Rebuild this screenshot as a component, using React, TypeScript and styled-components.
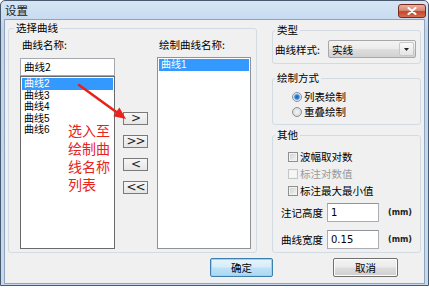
import React from 'react'
import styled, { createGlobalStyle } from 'styled-components'

const GlobalStyle = createGlobalStyle`
  html, body {
    margin: 0;
    padding: 0;
    background: #ffffff;
    overflow: hidden;
  }
  body {
    font-family: "Noto Sans CJK SC", "Noto Sans", sans-serif;
    font-size: 10.5px;
    color: #000;
  }
`

const Window = styled.div`
  width: 429px;
  height: 286px;
  box-sizing: border-box;
  border: 1px solid #4a5a6e;
  border-radius: 5px 5px 0 0;
  background: linear-gradient(#d6e5f5, #bfd5ee 30px, #c6d9ef);
  display: flex;
  flex-direction: column;
`

const TitleBar = styled.div`
  height: 18px;
  flex: none;
  display: flex;
  align-items: center;
  justify-content: space-between;
  padding: 0 2px 0 4px;
`

const Title = styled.span`
  font-size: 11.5px;
  line-height: 14px;
  color: #1a1a1a;
`

const CloseButton = styled.div`
  width: 28px;
  height: 14px;
  box-sizing: border-box;
  margin-top: 2px;
  border: 1px solid #7a2a1c;
  border-radius: 3px;
  background: linear-gradient(#eab0a2, #d98a74 45%, #c4472d 55%, #d46c52);
  display: flex;
  align-items: center;
  justify-content: center;
`

const Client = styled.div`
  flex: 1;
  margin: 0 3px 3px 3px;
  border: 1px solid #8ea3bc;
  background: #f0f0f0;
  padding: 1px 3px 6px 3px;
  display: flex;
  flex-direction: column;
`

const MainRow = styled.div`
  flex: 1;
  display: flex;
  gap: 15px;
  min-height: 0;
`

const Group = styled.fieldset<{ $pad: string; $mt?: number; $grow?: boolean; $width?: number }>`
  margin: ${p => p.$mt ?? 0}px 0 0 0;
  padding: ${p => p.$pad};
  border: 1px solid #d3dbe2;
  border-radius: 3px;
  min-width: 0;
  box-sizing: border-box;
  display: flex;
  flex-direction: column;
  flex: ${p => (p.$grow ? '1 1 auto' : 'none')};
  ${p => (p.$width ? `width: ${p.$width}px;` : '')}
`

const Legend = styled.legend<{ $offset: number }>`
  padding: 0 2px;
  margin-left: ${p => p.$offset}px;
  line-height: 14px;
  font-size: 10.5px;
`

const PickGrid = styled.div`
  flex: 1;
  position: relative;
  display: grid;
  grid-template-columns: 95px 1fr 94px;
  grid-template-rows: auto 1fr;
  row-gap: 5px;
  min-height: 0;
`

const ColLabel = styled.div<{ $indent: number }>`
  margin-top: 3px;
  line-height: 14px;
  padding-left: ${p => p.$indent}px;
  white-space: nowrap;
`

const LeftCol = styled.div`
  display: flex;
  flex-direction: column;
  min-height: 0;
`

const ComboInput = styled.div`
  margin-top: 1px;
  height: 18px;
  box-sizing: border-box;
  border: 1px solid #a5a8ae;
  background: #fff;
  padding-left: 3px;
  line-height: 16px;
  font-size: 10.5px;
`

const ListBox = styled.div<{ $dark?: boolean }>`
  flex: 1;
  box-sizing: border-box;
  border: 1px solid ${p => (p.$dark ? '#6a6a6a' : '#8e939a')};
  background: #fff;
  padding: 1px;
`

const ListItem = styled.div<{ $selected?: boolean }>`
  height: 11.5px;
  line-height: 11.5px;
  padding-left: 2px;
  font-family: "Liberation Sans", "Noto Sans CJK SC", sans-serif;
  font-size: 10px;
  background: ${p => (p.$selected ? '#3399ff' : 'transparent')};
  color: ${p => (p.$selected ? '#fff' : '#000')};
`

const MoveCol = styled.div`
  display: flex;
  flex-direction: column;
  gap: 10px;
  padding: 55px 0 0 8px;
`

const MoveButton = styled.div`
  width: 25px;
  height: 13px;
  box-sizing: border-box;
  border: 1px solid #7a7a7a;
  background: linear-gradient(#f6f6f6, #e6e6e6);
  font-family: "DejaVu Sans", "Liberation Sans", sans-serif;
  font-size: 12px;
  line-height: 11px;
  text-align: center;
  letter-spacing: -1px;
  color: #222;
`

const NoteText = styled.div`
  position: absolute;
  left: 48px;
  top: 87px;
  font-family: "Liberation Sans", "Noto Sans CJK SC", sans-serif;
  font-size: 14px;
  line-height: 18px;
  color: #e8231c;
`

const NoteArrow = styled.svg`
  position: absolute;
  left: 56px;
  top: 47px;
`

const RightCol = styled.div`
  width: 149px;
  flex: none;
  padding-top: 2px;
  display: flex;
  flex-direction: column;
`

const FieldRow = styled.div<{ $mt?: number }>`
  display: flex;
  align-items: center;
  margin-top: ${p => p.$mt ?? 0}px;
`

const FieldLabel = styled.span<{ $width: number; $indent?: number }>`
  width: ${p => p.$width}px;
  margin-left: ${p => p.$indent ?? 0}px;
  flex: none;
  white-space: nowrap;
`

const Select = styled.div`
  width: 88px;
  height: 18px;
  box-sizing: border-box;
  border: 1px solid #a8a8a8;
  border-radius: 2px;
  background: linear-gradient(#f4f4f4, #ececec 48%, #dedede 52%, #d2d2d2);
  display: flex;
  align-items: center;
  justify-content: space-between;
  padding: 0 1px 0 3px;
`

const SelectArrow = styled.div`
  width: 15px;
  height: 14px;
  box-sizing: border-box;
  border: 1px solid #c8c8c8;
  border-radius: 2px;
  background: linear-gradient(#fafafa, #e4e4e4);
  display: flex;
  align-items: center;
  justify-content: center;
`

const Option = styled.div<{ $indent: number }>`
  display: flex;
  align-items: center;
  height: 15px;
  padding-left: ${p => p.$indent}px;
  gap: 2px;
`

const RadioDot = styled.span<{ $checked?: boolean }>`
  width: 10px;
  height: 10px;
  flex: none;
  box-sizing: border-box;
  border-radius: 50%;
  border: 1px solid #8e9196;
  background: ${p =>
    p.$checked
      ? 'radial-gradient(circle, #0f5fb0 0, #3a8ddf 2.2px, #a9cbee 3px, #f2f2f2 4px)'
      : 'radial-gradient(circle, #f6f6f6 0, #dadada 4px)'};
`

const CheckRow = styled.div<{ $disabled?: boolean }>`
  display: flex;
  align-items: center;
  height: 17px;
  padding-left: 13px;
  gap: 2px;
  color: ${p => (p.$disabled ? '#9a9a9a' : '#000')};
`

const CheckBox = styled.span<{ $disabled?: boolean }>`
  width: 10px;
  height: 10px;
  flex: none;
  box-sizing: border-box;
  border: 1px solid ${p => (p.$disabled ? '#c6c6c6' : '#8e8f8f')};
  background: ${p => (p.$disabled ? '#f6f6f6' : 'linear-gradient(135deg, #cfcfcf, #f7f7f7)')};
  box-shadow: inset 0 0 0 1px #f2f2f2;
`

const TextInput = styled.div`
  width: 52px;
  height: 19px;
  box-sizing: border-box;
  border: 1px solid #abadb3;
  border-top-color: #8f939a;
  background: #fff;
  padding-left: 3px;
  line-height: 17px;
  font-family: "DejaVu Sans", "Liberation Sans", sans-serif;
  font-size: 10px;
`

const Unit = styled.span`
  margin-left: 9px;
  font-family: "DejaVu Sans", sans-serif;
  font-size: 8px;
  font-weight: bold;
  color: #222;
`

const ButtonRow = styled.div`
  display: flex;
  gap: 60px;
  margin-top: 5px;
  padding-left: 202px;
`

const DialogButton = styled.div<{ $default?: boolean; $width: number }>`
  width: ${p => p.$width}px;
  height: 19px;
  box-sizing: border-box;
  border: 1px solid ${p => (p.$default ? '#3c7fb1' : '#707070')};
  border-radius: 2px;
  background: ${p =>
    p.$default
      ? 'linear-gradient(#e6f4fc, #d6edfa 48%, #bfe2f7 52%, #a9d8f3)'
      : 'linear-gradient(#f3f3f3, #ebebeb 48%, #dddddd 52%, #cfcfcf)'};
  box-shadow: inset 0 0 0 1px ${p => (p.$default ? '#9ad2f0' : '#fcfcfc')};
  line-height: 17px;
  text-align: center;
  font-size: 10.5px;
`

const moves = ['>', '>>', '<', '<<']
const curves = ['曲线2', '曲线3', '曲线4', '曲线5', '曲线6']

const App = () => {
  return (
    <>
      <GlobalStyle />
      <Window>
        <TitleBar>
          <Title>设置</Title>
          <CloseButton>
            <svg width="10" height="8" viewBox="0 0 10 8">
              <path d="M1.5 1 L8.5 7 M8.5 1 L1.5 7" stroke="#fff" strokeWidth="2" strokeLinecap="round" />
            </svg>
          </CloseButton>
        </TitleBar>
        <Client>
          <MainRow>
            <Group $pad="0 5px 3px 11px" $width={249}>
              <Legend $offset={-6}>选择曲线</Legend>
              <PickGrid>
                <ColLabel $indent={2}>曲线名称:</ColLabel>
                <div />
                <ColLabel $indent={2}>绘制曲线名称:</ColLabel>
                <LeftCol>
                  <ComboInput>曲线2</ComboInput>
                  <ListBox $dark>
                    {curves.map((c, i) => (
                      <ListItem key={c} $selected={i === 0}>{c}</ListItem>
                    ))}
                  </ListBox>
                </LeftCol>
                <MoveCol>
                  {moves.map(m => (
                    <MoveButton key={m}>{m}</MoveButton>
                  ))}
                </MoveCol>
                <ListBox>
                  <ListItem $selected>曲线1</ListItem>
                </ListBox>
                <NoteArrow width="54" height="40" viewBox="0 0 54 40">
                  <line x1="3" y1="3" x2="41" y2="30.5" stroke="#e8231c" strokeWidth="2.6" strokeLinecap="round" />
                  <polygon points="50,37 37.3,34.3 43.4,25.6" fill="#e8231c" />
                </NoteArrow>
                <NoteText>
                  选入至<br />绘制曲<br />线名称<br />列表
                </NoteText>
              </PickGrid>
            </Group>
            <RightCol>
              <Group $pad="0 4px 5px 2px">
                <Legend $offset={0}>类型</Legend>
                <FieldRow $mt={3}>
                  <FieldLabel $width={53}>曲线样式:</FieldLabel>
                  <Select>
                    <span>实线</span>
                    <SelectArrow>
                      <svg width="5" height="3" viewBox="0 0 5 3">
                        <polygon points="0,0 5,0 2.5,3" fill="#222" />
                      </svg>
                    </SelectArrow>
                  </Select>
                </FieldRow>
              </Group>
              <Group $pad="4px 4px 5px 2px" $mt={7}>
                <Legend $offset={0}>绘制方式</Legend>
                <Option $indent={17}>
                  <RadioDot $checked />
                  <span>列表绘制</span>
                </Option>
                <Option $indent={17}>
                  <RadioDot />
                  <span>重叠绘制</span>
                </Option>
              </Group>
              <Group $pad="6px 4px 3px 2px" $mt={3} $grow>
                <Legend $offset={0}>其他</Legend>
                <CheckRow>
                  <CheckBox />
                  <span>波幅取对数</span>
                </CheckRow>
                <CheckRow $disabled>
                  <CheckBox $disabled />
                  <span>标注对数值</span>
                </CheckRow>
                <CheckRow>
                  <CheckBox />
                  <span>标注最大最小值</span>
                </CheckRow>
                <FieldRow $mt={4}>
                  <FieldLabel $width={46} $indent={6}>注记高度</FieldLabel>
                  <TextInput>1</TextInput>
                  <Unit>(mm)</Unit>
                </FieldRow>
                <FieldRow $mt={8}>
                  <FieldLabel $width={46} $indent={6}>曲线宽度</FieldLabel>
                  <TextInput>0.15</TextInput>
                  <Unit>(mm)</Unit>
                </FieldRow>
              </Group>
            </RightCol>
          </MainRow>
          <ButtonRow>
            <DialogButton $default $width={63}>确定</DialogButton>
            <DialogButton $width={65}>取消</DialogButton>
          </ButtonRow>
        </Client>
      </Window>
    </>
  )
}

export default App
